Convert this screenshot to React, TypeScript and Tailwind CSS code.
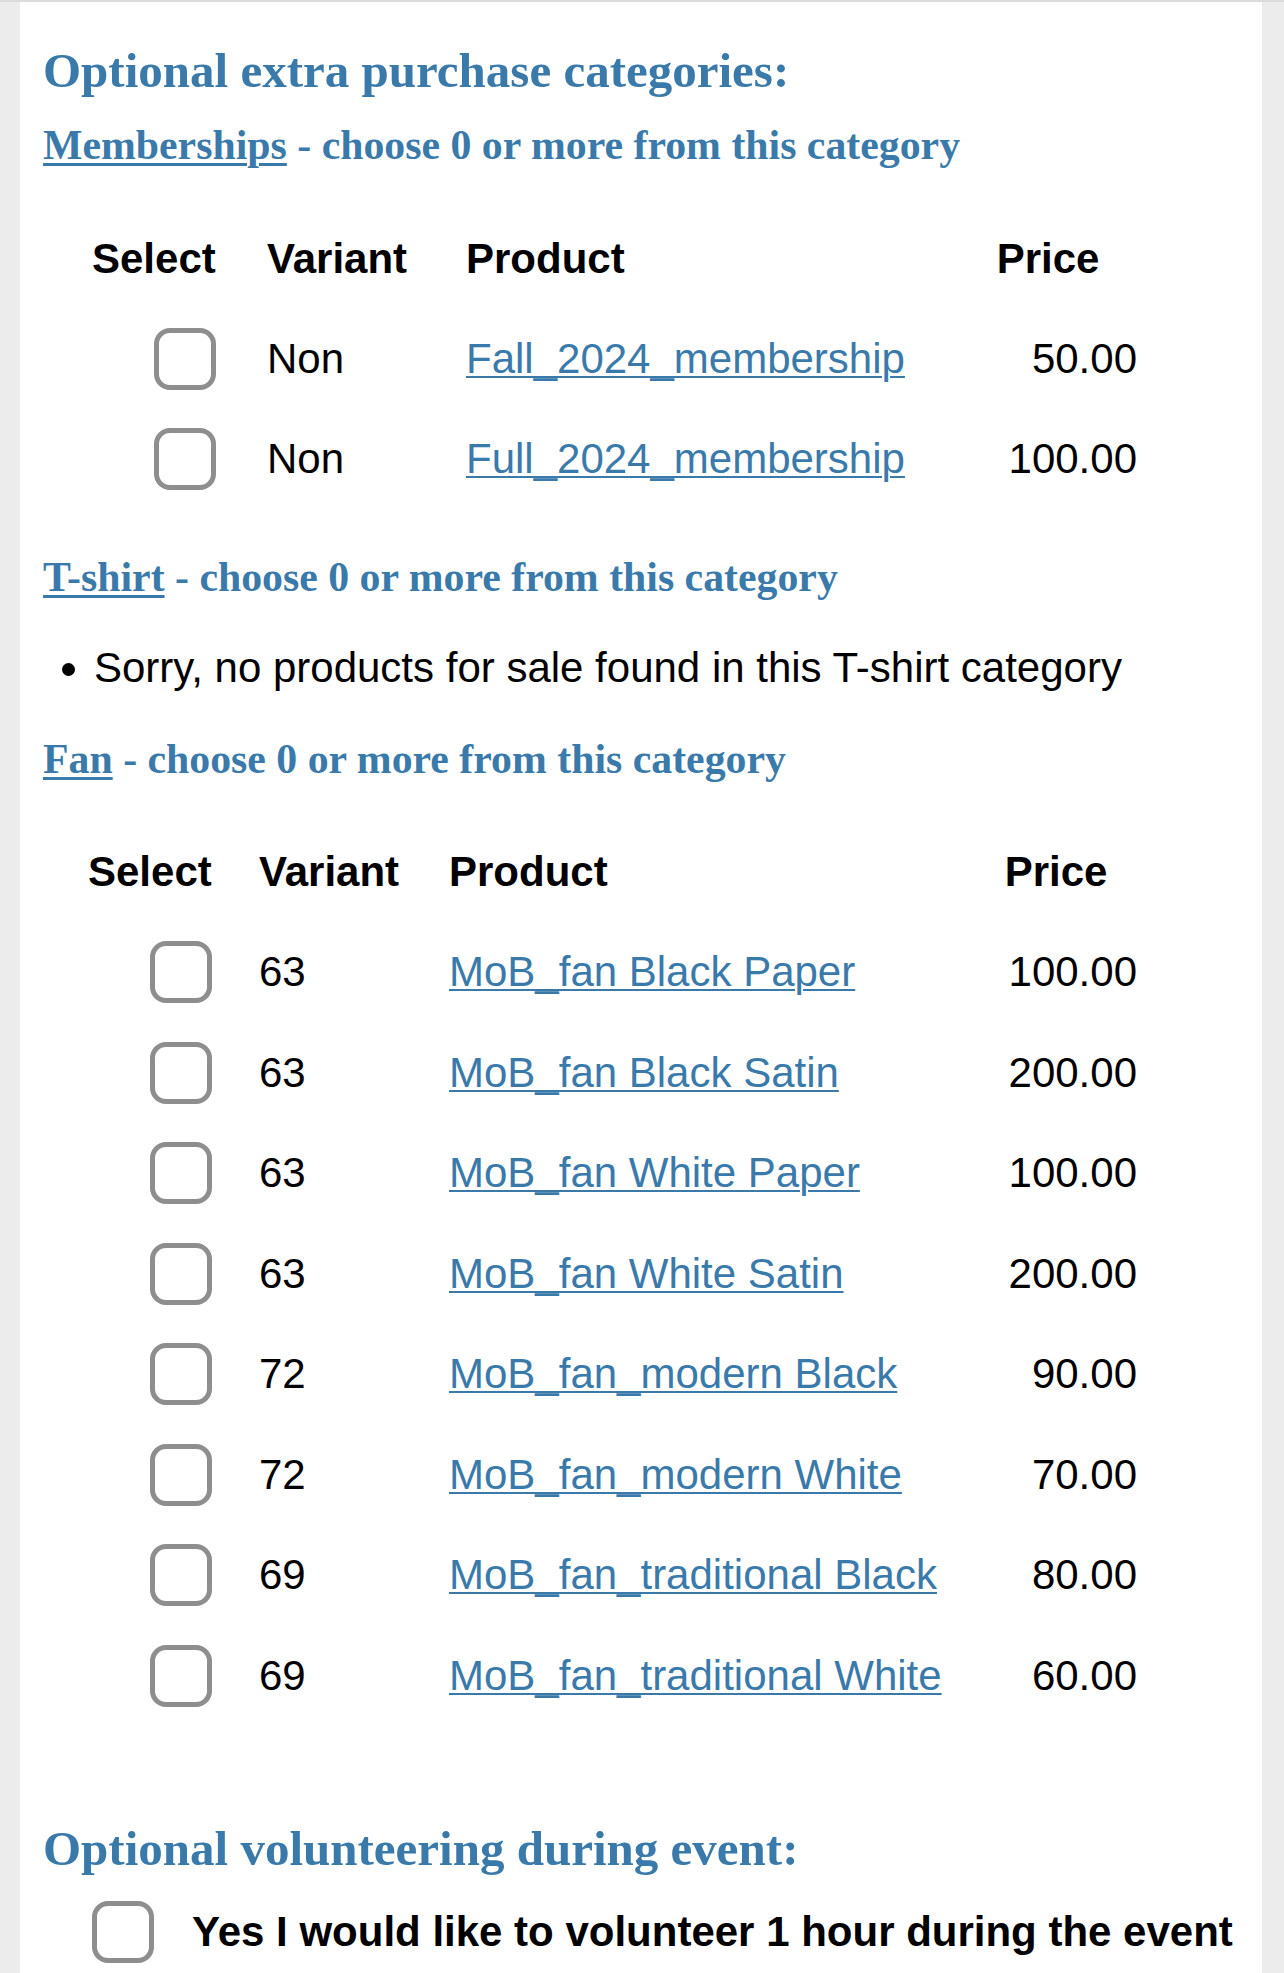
import React from 'react';

type Item = { variant: string; product: string; price: string };

const memberships: Item[] = [
  { variant: 'Non', product: 'Fall_2024_membership', price: '50.00' },
  { variant: 'Non', product: 'Full_2024_membership', price: '100.00' },
];

const fans: Item[] = [
  { variant: '63', product: 'MoB_fan Black Paper', price: '100.00' },
  { variant: '63', product: 'MoB_fan Black Satin', price: '200.00' },
  { variant: '63', product: 'MoB_fan White Paper', price: '100.00' },
  { variant: '63', product: 'MoB_fan White Satin', price: '200.00' },
  { variant: '72', product: 'MoB_fan_modern Black', price: '90.00' },
  { variant: '72', product: 'MoB_fan_modern White', price: '70.00' },
  { variant: '69', product: 'MoB_fan_traditional Black', price: '80.00' },
  { variant: '69', product: 'MoB_fan_traditional White', price: '60.00' },
];

const Checkbox: React.FC<{ className?: string }> = ({ className = '' }) => (
  <input
    type="checkbox"
    className={`appearance-none m-0 w-[62px] h-[62px] border-[5px] border-[#8e8e8e] rounded-[16px] bg-white shrink-0 ${className}`}
  />
);

const CategoryTitle: React.FC<{ name: string; className?: string }> = ({ name, className = '' }) => (
  <div className={`h-[52px] flex items-center font-['Liberation_Serif',serif] font-bold text-[41.8px] leading-none text-[#3a7aab] ${className}`}>
    <span>
      <a href="#" className="underline decoration-[3px] underline-offset-[4px]">
        {name}
      </a>{' '}
      - choose 0 or more from this category
    </span>
  </div>
);

const App: React.FC = () => {
  return (
    <div className="min-h-screen bg-[#ececec] border-t-2 border-[#dcdcdc] font-['Liberation_Sans',Arial,sans-serif] text-[42px] leading-none text-black">
      <div className="ml-[20px] w-[1242px] min-h-[1971px] bg-white pl-[23px] pt-[38px]">
        <h3 className="h-[60px] flex items-center font-['Liberation_Serif',serif] font-bold text-[49px] leading-none text-[#3a7aab]">
          Optional extra purchase categories:
        </h3>

        <CategoryTitle name="Memberships" className="mt-[20px]" />

        {/* memberships table */}
        <div className="mt-[37px]">
          <div className="grid grid-cols-[224px_199px_493px_178px] h-[100px] items-center font-bold">
            <div className="pl-[49px]">Select</div>
            <div>Variant</div>
            <div>Product</div>
            <div className="text-center">Price</div>
          </div>
          {memberships.map((m) => (
            <div key={m.product} className="grid grid-cols-[224px_199px_493px_178px] h-[100px] items-center">
              <div className="pl-[111px] flex">
                <Checkbox />
              </div>
              <div>{m.variant}</div>
              <div>
                <a href="#" className="text-[#3a7aab] underline decoration-2 underline-offset-[3px]">
                  {m.product}
                </a>
              </div>
              <div className="text-right">{m.price}</div>
            </div>
          ))}
        </div>

        <CategoryTitle name="T-shirt" className="mt-[43px]" />

        <ul className="mt-[38px] list-disc pl-[51px]">
          <li className="h-[52px] leading-[52px]">Sorry, no products for sale found in this T-shirt category</li>
        </ul>

        <CategoryTitle name="Fan" className="mt-[40px]" />

        {/* fan table */}
        <div className="mt-[36px]">
          <div className="grid grid-cols-[216px_190px_526px_162px] h-[100px] items-center font-bold">
            <div className="pl-[45px]">Select</div>
            <div>Variant</div>
            <div>Product</div>
            <div className="text-center">Price</div>
          </div>
          {fans.map((f) => (
            <div key={f.product} className="grid grid-cols-[216px_190px_526px_162px] h-[100.5px] items-center">
              <div className="pl-[107px] flex">
                <Checkbox />
              </div>
              <div>{f.variant}</div>
              <div>
                <a href="#" className="text-[#3a7aab] underline decoration-2 underline-offset-[3px] whitespace-nowrap">
                  {f.product}
                </a>
              </div>
              <div className="text-right">{f.price}</div>
            </div>
          ))}
        </div>

        <h3 className="mt-[92px] h-[60px] flex items-center font-['Liberation_Serif',serif] font-bold text-[49px] leading-none text-[#3a7aab]">
          Optional volunteering during event:
        </h3>

        <label className="mt-[22px] h-[64px] flex items-center pl-[49px] font-bold">
          <Checkbox className="w-[61px] h-[61px]" />
          <span className="ml-[38px] whitespace-nowrap">Yes I would like to volunteer 1 hour during the event</span>
        </label>
      </div>
    </div>
  );
};

export default App;
